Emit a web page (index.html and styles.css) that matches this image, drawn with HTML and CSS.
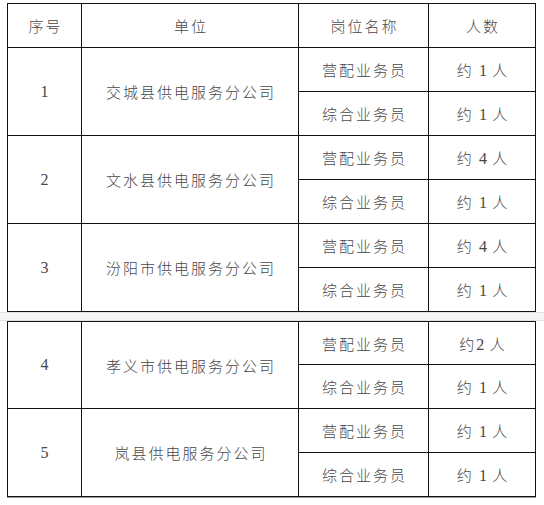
FILE: index.html
```html
<!DOCTYPE html>
<html lang="zh">
<head>
<meta charset="utf-8">
<link rel="stylesheet" href="styles.css">
</head>
<body>
<div class="page">
  <div class="grid first">
    <div class="cell">序号</div>
    <div class="cell">单位</div>
    <div class="cell">岗位名称</div>
    <div class="cell">人数</div>

    <div class="cell num span2">1</div>
    <div class="cell span2">交城县供电服务分公司</div>
    <div class="cell">营配业务员</div>
    <div class="cell"><span>约 <span class="d">1</span> 人</span></div>
    <div class="cell">综合业务员</div>
    <div class="cell"><span>约 <span class="d">1</span> 人</span></div>

    <div class="cell num span2">2</div>
    <div class="cell span2">文水县供电服务分公司</div>
    <div class="cell">营配业务员</div>
    <div class="cell"><span>约 <span class="d">4</span> 人</span></div>
    <div class="cell">综合业务员</div>
    <div class="cell"><span>约 <span class="d">1</span> 人</span></div>

    <div class="cell num span2">3</div>
    <div class="cell span2">汾阳市供电服务分公司</div>
    <div class="cell">营配业务员</div>
    <div class="cell"><span>约 <span class="d">4</span> 人</span></div>
    <div class="cell">综合业务员</div>
    <div class="cell"><span>约 <span class="d">1</span> 人</span></div>
  </div>

  <div class="break"></div>

  <div class="grid second">
    <div class="cell num span2">4</div>
    <div class="cell span2">孝义市供电服务分公司</div>
    <div class="cell">营配业务员</div>
    <div class="cell"><span>约<span class="d">2</span> 人</span></div>
    <div class="cell">综合业务员</div>
    <div class="cell"><span>约 <span class="d">1</span> 人</span></div>

    <div class="cell num span2">5</div>
    <div class="cell span2">岚县供电服务分公司</div>
    <div class="cell">营配业务员</div>
    <div class="cell"><span>约 <span class="d">1</span> 人</span></div>
    <div class="cell">综合业务员</div>
    <div class="cell"><span>约 <span class="d">1</span> 人</span></div>
  </div>
</div>
</body>
</html>
```
FILE: styles.css
```css
html, body {
  margin: 0;
  padding: 0;
  background: #ffffff;
}
body {
  width: 544px;
  height: 505px;
  overflow: hidden;
  font-family: "Noto Sans CJK SC", "Liberation Serif", sans-serif;
  color: #484848;
}
.page {
  padding: 3px 0 0 7px;
}
.grid {
  display: grid;
  grid-template-columns: 73px 216px 129px 106px;
  gap: 1px;
  background: #111111;
  border: 1px solid #111111;
  box-sizing: border-box;
  width: 529px;
}
.first {
  grid-template-rows: repeat(7, 43px);
}
.second {
  grid-template-rows: 42px 43px 43px 43px;
  box-shadow: 0 1px 0 #9a9a9a;
}
.cell {
  background: #ffffff;
  display: flex;
  align-items: center;
  justify-content: center;
  font-size: 15px;
  letter-spacing: 2px;
  padding-left: 2px;
  font-weight: 300;
  white-space: pre;
}
.span2 {
  grid-row: span 2;
}
.num, .d {
  font-family: "Liberation Serif", serif;
  font-size: 16px;
  letter-spacing: 0;
}
.num {
  padding-left: 0;
}
.break {
  height: 9px;
  margin: 0 0 0 -7px;
  width: 544px;
  background: #f4f4f4;
  border-top: 1px solid #e2e2e2;
  border-bottom: 1px solid #e2e2e2;
  box-sizing: border-box;
}
```
